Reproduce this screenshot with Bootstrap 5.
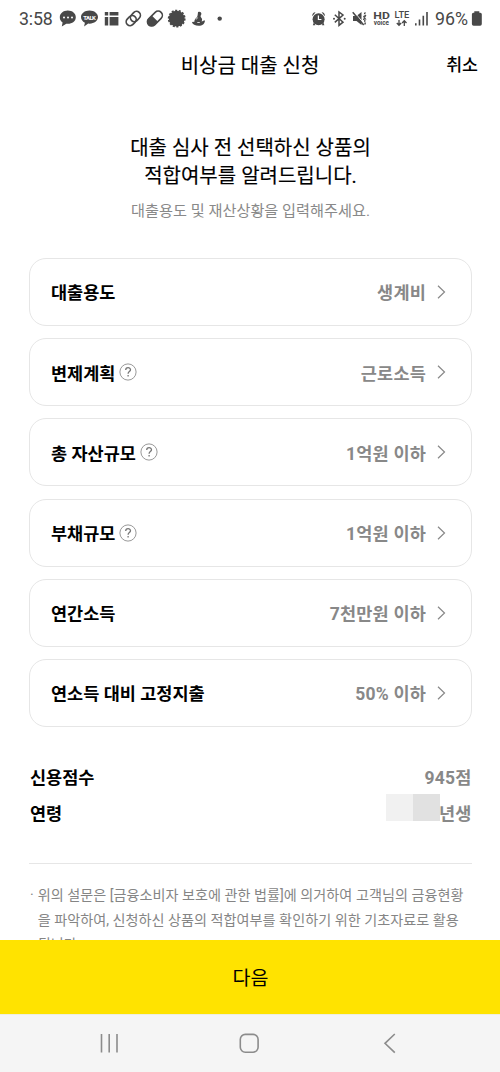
<!DOCTYPE html>
<html lang="ko">
<head>
<meta charset="utf-8">
<meta name="viewport" content="width=device-width, initial-scale=1">
<title>비상금 대출 신청</title>
<link href="https://cdn.jsdelivr.net/npm/bootstrap@5.3.0/dist/css/bootstrap.min.css" rel="stylesheet">
<style>
  body { font-family: Roboto, "Noto Sans CJK KR", sans-serif; color: #000; background: #fff; }
  .screen { width: 500px; height: 1072px; }
  .statusbar { height: 38px; color: #484848; padding: 0 17px 0 19px; }
  .clock { font-size: 17.8px; letter-spacing: -.2px; line-height: 38px; width: 38.5px; }
  .battery-text { font-size: 17.8px; line-height: 38px; width: 35px; margin-right: 1px; }
  .titlebar { height: 52px; display: grid; grid-template-columns: 1fr auto 1fr; padding: 3px 22px 0 22px; }
  .page-title { font-size: 20px; font-weight: 400; -webkit-text-stroke: .15px #000; }
  .cancel { font-size: 17.3px; font-weight: 500; }
  .intro { padding: 43.5px 0 0 1px; height: 168px; }
  .intro h2 { font-size: 20px; line-height: 28px; font-weight: 400; -webkit-text-stroke: .15px #000; }
  .intro p { font-size: 15.2px; line-height: 24px; color: #898989; margin-top: 9px; }
  .choices { padding: 0 28px 0 29px; gap: 12.2px; }
  .choice { height: 68px; border: 1px solid #e6e6e6; border-radius: 17px; padding: 0 25px 0 21px; font-size: 17.5px; font-weight: 700; }
  .choice span { padding-top: 3px; }
  .val { color: #888; letter-spacing: .2px; }
  .choice .val { margin-right: 11px; }
  .summary { margin: 33px 29px 0 30px; font-size: 17.5px; font-weight: 700; }
  .summary > div { height: 36px; }
  .masked { width: 54px; height: 27px; margin-top: -13px; margin-right: -1px; background: linear-gradient(90deg, #f1f1f1 50%, #e1e1e1 50%); }
  .summary .val { margin-right: -.5px; }
  .rule { margin: 31.5px 28px 0 29px; border-top: 1px solid #e6e6e6; }
  .notes { margin: 19px 28px 0 30px; font-size: 14.12px; line-height: 24.5px; color: #858585; letter-spacing: .02px; }
  .next { height: 74px; background: #ffe300; font-size: 19.5px; border: 0; padding: 3px 0 0 1px; }
  .navkeys { height: 58px; background: #f5f5f5; border-top: 1px solid #eeefdf; }
</style>
</head>
<body>
<div class="screen d-flex flex-column overflow-hidden">
  <header class="statusbar d-flex align-items-center justify-content-between flex-shrink-0">
    <div class="d-flex align-items-center">
      <span class="clock">3:58</span>
      <svg width="170" height="38" viewBox="58 0 170 38" fill="#484848">
        <path d="M67.800 10.500c4.600 0 8 2.900 8 6.700s-3.400 6.600-8 6.600l-1.500-.1-4.500 2.900.8-4c-1.800-1.200-2.800-3.100-2.800-5.400 0-3.800 3.500-6.700 8-6.700z"/>
        <g fill="#fff"><circle cx="64" cy="17.600" r="1"/><circle cx="68" cy="17.600" r="1"/><circle cx="72" cy="17.600" r="1"/></g>
        <path d="M89.500 10.500c4.800 0 8.500 2.900 8.500 6.600s-3.700 6.600-8.500 6.600l-1.300-.1-4.100 2.900.8-3.700c-2.400-1.200-3.900-3.200-3.900-5.700 0-3.700 3.700-6.600 8.500-6.600z"/>
        <text x="89.600" y="19.700" font-size="6" font-weight="700" fill="#fff" text-anchor="middle" textLength="12.500">TALK</text>
        <path d="M104.800 12h3.400v3.400h-3.400zM109.600 12h8.800v3.400h-8.800zM104.800 17h3.400v8.600h-3.400zM109.600 17h8.800v8.600h-8.800z"/>
        <g fill="none" stroke="#484848" stroke-width="1.700">
          <rect x="-3.900" y="-5.500" width="7.800" height="11" rx="3.900" transform="translate(131.200 20.600) rotate(43)"/>
          <rect x="-3.900" y="-5.500" width="7.800" height="11" rx="3.900" transform="translate(135.400 16.500) rotate(43)"/>
        </g>
        <g transform="translate(154.900 18.600) rotate(45)"><rect x="-4.200" y="-8.800" width="8.400" height="17.600" rx="4.200" fill="none" stroke="#484848" stroke-width="1.600"/><path d="M-4.500 0h9v4.500a4.500 4.500 0 0 1-9 0z"/></g>
        <circle cx="176.700" cy="18.600" r="7.900"/><circle cx="176.700" cy="18.600" r="8.100" fill="none" stroke="#484848" stroke-width="1.600" stroke-dasharray="2.100 1.535"/>
        <path d="M198 12.200c1.300-1 3.400-.4 3.400 1.600 0 1.200-1 1.700-.8 2.600.2 1 1.700 1.600 1.500 3.500l-.5 1.500c1.200-.4 2.200-1 3.400-1-.3 3.300-2.600 5.300-6.300 5.300-3.500 0-6.100-1-6.800-3.600l2.500-.4c-.2-2.300 1.500-3.200 2.500-4.400.8-1.300.9-3.400 1.100-5.100z"/>
        <path d="M197.600 17.500l-1.400 2M197.300 22.500h2.500" stroke="#fff" stroke-width=".8"/>
        <circle cx="219.700" cy="18.600" r="2.200"/>
      </svg>
    </div>
    <div class="d-flex align-items-center">
      <svg width="124" height="38" viewBox="312 0 124 38" fill="#484848">
        <circle cx="319.600" cy="19.200" r="6"/><path d="M313.400 16.200c-.5-2.400 1-4.100 3.200-4zM325.800 16.200c.5-2.400-1-4.100-3.200-4zM315 22l-1.200 3.200h2.500zM324.200 22l1.200 3.200h-2.500z"/>
        <path d="M319.400 15.600v3.900h3" fill="none" stroke="#fff" stroke-width="1.200"/>
        <path d="M335.800 14.800l8.200 7.400-4 3.200V12l4 3-8.200 7.400" fill="none" stroke="#484848" stroke-width="1.500"/><circle cx="335" cy="18.700" r="1"/><circle cx="345.700" cy="18.700" r="1"/>
        <path d="M354 16h3.500l5-4v13l-5-4H354z"/><path d="M354.800 11.500l10.500 12.500" stroke="#fff" stroke-width="1"/><path d="M353.700 12.200l11 12.800" stroke="#484848" stroke-width="1.500"/>
        <path d="M364.500 16q1.500 1.500 0 4M366.500 12.500q-2 1.500 0 3.200q-1.500 2 0 3.500q-1.500 2 0 3.200q-.5 1.500-1 2.500" fill="none" stroke="#484848" stroke-width="1.400" stroke-dasharray="2 .8"/>
        <text x="374.300" y="19.200" font-size="9.800" font-weight="700" textLength="16.500" lengthAdjust="spacingAndGlyphs">HD</text>
        <text x="374.800" y="25.300" font-size="6.300" font-weight="700" textLength="15.200" lengthAdjust="spacingAndGlyphs">voice</text>
        <text x="395.500" y="18" font-size="9" font-weight="500" textLength="14.800" lengthAdjust="spacingAndGlyphs">LTE</text>
        <path d="M400 20v5.200M397.800 23l2.200 2.300 2.200-2.300M405.300 26v-5.300M403.100 23l2.200-2.300 2.200 2.300" fill="none" stroke="#484848" stroke-width="1.300"/>
        <path d="M416 23.200h1.600v2.300H416zM419.700 19.500h1.600v6h-1.600zM423.500 15.800h1.600v9.700h-1.600zM427.200 12h1.600v13.500h-1.600z"/>
      </svg>
      <span class="battery-text">96%</span>
      <svg width="12" height="38" viewBox="471 0 12 38" fill="#484848"><path d="M474.300 11.300h5v1.400h1q1.500 0 1.500 1.500V24q0 1.700-1.700 1.700h-6.500q-1.700 0-1.700-1.700v-9.800q0-1.500 1.500-1.500h.9z"/></svg>
    </div>
  </header>

  <nav class="titlebar align-items-center flex-shrink-0">
    <span></span>
    <h1 class="page-title mb-0">비상금 대출 신청</h1>
    <a class="cancel text-end text-decoration-none text-black">취소</a>
  </nav>

  <main class="flex-grow-1 overflow-hidden">
    <section class="intro text-center">
      <h2 class="mb-0">대출 심사 전 선택하신 상품의<br>적합여부를 알려드립니다.</h2>
      <p class="mb-0">대출용도 및 재산상황을 입력해주세요.</p>
    </section>

    <svg class="d-none">
      <symbol id="chevron" viewBox="0 0 9 14"><path d="M1 .8l6.500 6.200L1 13.200" fill="none" stroke="#888" stroke-width="1.200"/></symbol>
      <symbol id="help" viewBox="0 0 18 18"><circle cx="9" cy="9" r="8.100" fill="none" stroke="#999" stroke-width="1"/><path d="M6.700 7c0-3.100 4.800-3 4.800-.2 0 1.700-2.400 1.900-2.400 3.900M9.100 11.900v1.500" fill="none" stroke="#777" stroke-width="1.300"/></symbol>
    </svg>

    <section class="choices d-flex flex-column">
      <div class="choice d-flex align-items-center"><span class="me-auto">대출용도</span><span class="val">생계비</span><svg width="9" height="14"><use href="#chevron"/></svg></div>
      <div class="choice d-flex align-items-center"><span>변제계획</span><svg class="ms-1 me-auto" width="18" height="18"><use href="#help"/></svg><span class="val">근로소득</span><svg width="9" height="14"><use href="#chevron"/></svg></div>
      <div class="choice d-flex align-items-center"><span>총 자산규모</span><svg class="ms-1 me-auto" width="18" height="18"><use href="#help"/></svg><span class="val">1억원 이하</span><svg width="9" height="14"><use href="#chevron"/></svg></div>
      <div class="choice d-flex align-items-center"><span>부채규모</span><svg class="ms-1 me-auto" width="18" height="18"><use href="#help"/></svg><span class="val">1억원 이하</span><svg width="9" height="14"><use href="#chevron"/></svg></div>
      <div class="choice d-flex align-items-center"><span class="me-auto">연간소득</span><span class="val">7천만원 이하</span><svg width="9" height="14"><use href="#chevron"/></svg></div>
      <div class="choice d-flex align-items-center"><span class="me-auto">연소득 대비 고정지출</span><span class="val">50% 이하</span><svg width="9" height="14"><use href="#chevron"/></svg></div>
    </section>

    <section class="summary">
      <div class="d-flex align-items-center justify-content-between"><span>신용점수</span><span class="val">945점</span></div>
      <div class="d-flex align-items-center"><span class="me-auto">연령</span><span class="masked"></span><span class="val">년생</span></div>
    </section>
    <div class="rule"></div>
    <div class="notes d-flex text-nowrap"><span class="pe-1">·</span><span>위의 설문은 [금융소비자 보호에 관한 법률]에 의거하여 고객님의 금융현황<br>을 파악하여, 신청하신 상품의 적합여부를 확인하기 위한 기초자료로 활용<br>됩니다.</span></div>
  </main>

  <button class="next w-100 flex-shrink-0 text-black" type="button">다음</button>
  <footer class="navkeys flex-shrink-0">
    <svg class="d-block" width="500" height="57" viewBox="0 1015 500 57" fill="none" stroke="#8c8c8c" stroke-width="1.600">
      <path d="M101.500 1034v18.500M109.200 1034v18.500M117 1034v18.500"/>
      <rect x="240.300" y="1034.400" width="17.800" height="17.800" rx="5"/>
      <path d="M394.800 1034l-9.800 9.300 9.800 9.300"/>
    </svg>
  </footer>
</div>
<script src="https://cdn.jsdelivr.net/npm/bootstrap@5.3.0/dist/js/bootstrap.bundle.min.js"></script>
</body>
</html>
